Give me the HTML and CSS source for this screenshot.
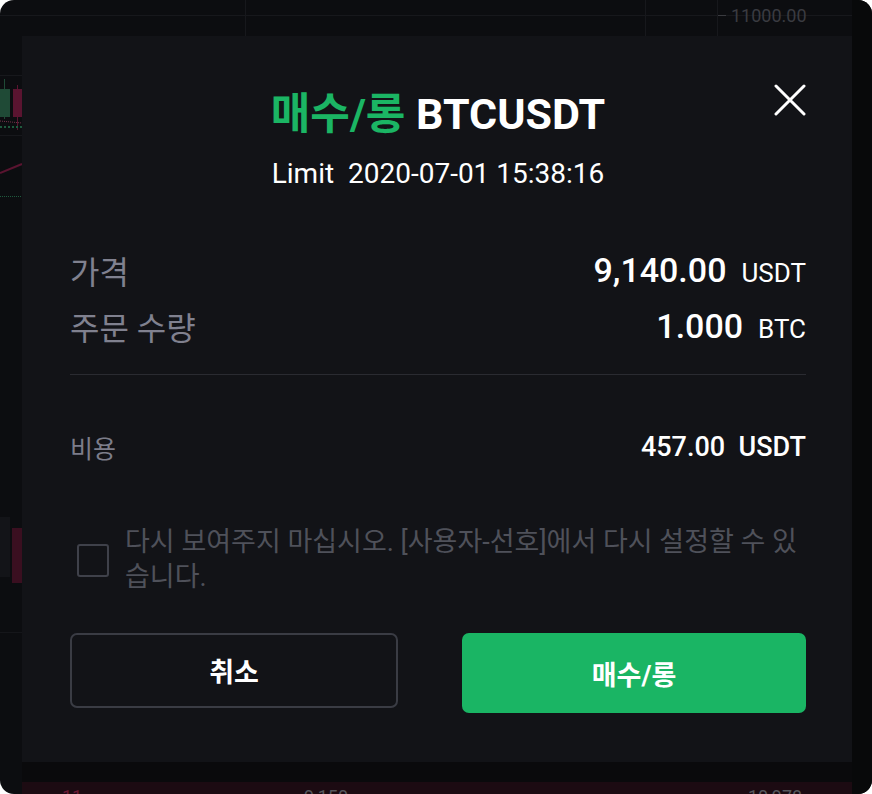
FILE: index.html
```html
<!DOCTYPE html>
<html lang="ko">
<head>
    <meta charset="UTF-8">
    <meta name="viewport" content="width=device-width, initial-scale=1.0">
    <title>매수/롱 BTCUSDT</title>
    <link rel="stylesheet" href="styles.css">
</head>
<body>

    <div class="screen">

        <!-- Chart behind the dialog -->
        <svg class="chart" width="872" height="794" viewBox="0 0 872 794">
            <g stroke="#17181c" stroke-width="1">
                <line x1="0" y1="15.5" x2="852" y2="15.5"/>
                <line x1="0" y1="75.5" x2="22" y2="75.5"/>
                <line x1="0" y1="135.5" x2="22" y2="135.5"/>
                <line x1="245.5" y1="0" x2="245.5" y2="36"/>
                <line x1="645.5" y1="0" x2="645.5" y2="36"/>
                <line x1="717.5" y1="0" x2="717.5" y2="36"/>
            </g>
            <line x1="718" y1="15.5" x2="726" y2="15.5" stroke="#3a3b40"/>
            <text x="731" y="22" class="axis">11000.00</text>

            <!-- candles -->
            <line x1="4.5" y1="79" x2="4.5" y2="119" stroke="#1f4a36"/>
            <rect x="0" y="89" width="10" height="28" fill="#1f4a36"/>
            <line x1="17.5" y1="85" x2="17.5" y2="130" stroke="#5a1430"/>
            <rect x="13" y="89" width="9" height="28" fill="#5a1430"/>
            <line x1="0" y1="121" x2="22" y2="123" stroke="#7a3550" stroke-dasharray="1 1"/>
            <line x1="0" y1="127" x2="22" y2="127" stroke="#1f5a3e" stroke-width="2" stroke-dasharray="2 2"/>
            <line x1="0" y1="173" x2="22" y2="164" stroke="#5a1430" stroke-width="2"/>
            <line x1="0" y1="196.5" x2="22" y2="196.5" stroke="#1f5a3e" stroke-dasharray="1 1"/>

            <!-- order book slice on the left -->
            <rect x="0" y="517" width="10" height="60" fill="#131418"/>
            <rect x="12" y="528" width="10" height="55" fill="#3a0f20"/>
            <rect x="0" y="632" width="22" height="1" fill="#15161a"/>

            <!-- right edge -->
            <rect x="852" y="0" width="20" height="794" fill="#08090a"/>
        </svg>

        <!-- Order book row under the dialog -->
        <div class="book-row">
            <span class="book-price">11</span>
            <span class="book-mid">9,150</span>
            <span class="book-total">10,978</span>
        </div>

        <!-- Dialog -->
        <div class="modal">
            <button class="close" aria-label="close">
                <svg width="32" height="32" viewBox="0 0 32 32">
                    <path d="M2 2 L30 30 M30 2 L2 30" stroke="#fff" stroke-width="3" stroke-linecap="round" fill="none"/>
                </svg>
            </button>

            <div class="head">
                <h1><span class="side">매수/롱</span> BTCUSDT</h1>
                <p class="sub">Limit&nbsp;&nbsp;2020-07-01 15:38:16</p>
            </div>

            <div class="rows">
                <div class="row">
                    <span class="label">가격</span>
                    <span class="value">9,140.00<small>USDT</small></span>
                </div>
                <div class="row">
                    <span class="label">주문 수량</span>
                    <span class="value">1.000<small>BTC</small></span>
                </div>
            </div>

            <div class="divider"></div>

            <div class="row cost">
                <span class="label">비용</span>
                <span class="value">457.00&nbsp;&nbsp;USDT</span>
            </div>

            <label class="remember">
                <span class="box"></span>
                <span class="remember-text">다시 보여주지 마십시오. [사용자-선호]에서 다시 설정할 수 있습니다.</span>
            </label>

            <div class="actions">
                <button class="btn cancel">취소</button>
                <button class="btn confirm">매수/롱</button>
            </div>
        </div>

    </div>

</body>
</html>
```

FILE: styles.css
```css
/* Page frame */
body {
    margin: 0;
    background-color: #fff;
    font-family: Roboto, "Noto Sans CJK KR", sans-serif;
}

.screen {
    position: relative;
    width: 872px;
    height: 794px;
    border-radius: 14px;
    overflow: hidden;
    background-color: #0c0d10;
}

.chart {
    position: absolute;
    top: 0;
    left: 0;
}

.chart .axis {
    font-family: Roboto, sans-serif;
    font-size: 18px;
    fill: #3a3b41;
}

/* Order book row peeking at the bottom */
.book-row {
    position: absolute;
    left: 22px;
    top: 762px;
    width: 830px;
    height: 32px;
    box-sizing: border-box;
    border-top: 20px solid #0a0a0c;
    background-color: #1c0b12;
    font-size: 18px;
    line-height: 1;
    color: #55565c;
    overflow: hidden;
}

.book-row span {
    position: absolute;
    top: 6px;
}

.book-price { left: 40px; color: #6a1a35; }
.book-mid { left: 282px; }
.book-total { left: 726px; }

/* Dialog */
.modal {
    position: absolute;
    left: 22px;
    top: 36px;
    width: 830px;
    height: 726px;
    box-sizing: border-box;
    padding: 53px 46px 0 48px;
    background-color: #121317;
    color: #fff;
}

.close {
    position: absolute;
    top: 48px;
    right: 46px;
    width: 32px;
    height: 32px;
    padding: 0;
    border: none;
    background: none;
    cursor: pointer;
}

.close svg {
    display: block;
}

.head {
    text-align: center;
}

.head h1 {
    margin: 0;
    font-size: 43px;
    line-height: 50px;
    font-weight: 700;
}

.side {
    color: #1bb564;
}

.sub {
    margin: 19px 0 0;
    font-size: 28px;
    line-height: 32px;
}

.rows {
    margin-top: 58px;
    display: flex;
    flex-direction: column;
    gap: 12px;
}

.row {
    display: flex;
    justify-content: space-between;
    align-items: center;
    height: 44px;
}

.label {
    font-size: 32px;
    color: #80818f;
}

.value {
    font-size: 34px;
    font-weight: 500;
    display: flex;
    align-items: baseline;
}

.value small {
    font-size: 26px;
    font-weight: 400;
    margin-left: 15px;
}

.divider {
    height: 1px;
    margin-top: 26px;
    background-color: #2a2b31;
}

.row.cost {
    margin-top: 55px;
    height: 34px;
}

.row.cost .label {
    font-size: 25px;
    color: #7c7d8a;
}

.row.cost .value {
    font-size: 27px;
}

/* Don't show again */
.remember {
    margin-top: 61px;
    display: flex;
    align-items: center;
    gap: 16px;
}

.box {
    flex: none;
    width: 28px;
    height: 29px;
    margin-left: 7px;
    border: 2px solid #3f414a;
    border-radius: 3px;
}

.remember-text {
    font-size: 27px;
    line-height: 35px;
    color: #4f515a;
}

/* Buttons */
.actions {
    margin-top: 38px;
    display: flex;
    justify-content: space-between;
    align-items: flex-start;
}

.btn {
    font-family: inherit;
    font-size: 27px;
    font-weight: 700;
    color: #fff;
    cursor: pointer;
    border-radius: 7px;
}

.cancel {
    width: 328px;
    height: 75px;
    border: 2px solid #3a3c44;
    background: none;
}

.confirm {
    width: 344px;
    height: 80px;
    border: none;
    background-color: #1ab564;
}
```
